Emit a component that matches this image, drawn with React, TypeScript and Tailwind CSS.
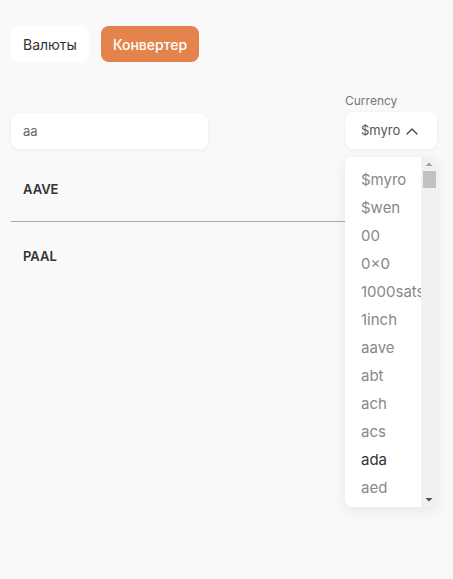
import { useState } from "react";

const currencies = [
  "$myro",
  "$wen",
  "00",
  "0×0",
  "1000sats",
  "1inch",
  "aave",
  "abt",
  "ach",
  "acs",
  "ada",
  "aed",
];

const results = ["AAVE", "PAAL"];

const ChevronUp = () => (
  <svg width="12" height="8" viewBox="0 0 12 8" fill="none">
    <path d="M1 7l5-5 5 5" stroke="#444" strokeWidth="1.3" strokeLinecap="round" strokeLinejoin="round" />
  </svg>
);

const FakeScrollbar = () => (
  <div className="w-[16px] shrink-0 bg-[#f1f1f1] flex flex-col items-center">
    <svg width="16" height="14" viewBox="0 0 16 14">
      <path d="M4.5 9h7L8 5.5z" fill="#a3a3a3" />
    </svg>
    <div className="w-[13px] h-[17px] bg-[#c1c1c1]" />
    <div className="flex-1" />
    <svg width="16" height="14" viewBox="0 0 16 14">
      <path d="M4.5 5h7L8 8.5z" fill="#505050" />
    </svg>
  </div>
);

const App = () => {
  const [tab, setTab] = useState("convert");
  const [query, setQuery] = useState("aa");

  return (
    <div className="min-h-[579px] bg-[#f9f9f9] px-[11px] pt-[26px] font-['Inter',sans-serif]">
      <div className="flex gap-3">
        <button
          onClick={() => setTab("list")}
          className={`h-[36px] px-3 rounded-lg text-[14px] ${
            tab === "list" ? "bg-[#e4834b] text-white font-medium" : "bg-white text-[#333]"
          }`}
        >
          Валюты
        </button>
        <button
          onClick={() => setTab("convert")}
          className={`h-[36px] px-3 rounded-lg text-[14px] ${
            tab === "convert" ? "bg-[#e4834b] text-white font-medium" : "bg-white text-[#333]"
          }`}
        >
          Конвертер
        </button>
      </div>

      <div className="flex items-end justify-between mt-[31px]">
        <input
          value={query}
          onChange={(e) => setQuery(e.target.value)}
          className="w-[197px] h-[36px] rounded-lg bg-white px-3 text-[13px] text-[#666] outline-none shadow-[0_1px_4px_rgba(0,0,0,0.06)]"
        />
        <div className="relative w-[92px] mr-[5px]">
          <div className="text-[12px] text-[#777] leading-4 mb-[3px]">Currency</div>
          <div className="h-[37px] rounded-lg bg-white flex items-center justify-between pl-4 pr-[19px] text-[13px] text-[#555] shadow-[0_1px_4px_rgba(0,0,0,0.06)]">
            <span>$myro</span>
            <ChevronUp />
          </div>
          <div className="absolute left-0 top-[64px] z-10 w-[92px] h-[350px] flex rounded-lg overflow-hidden bg-white shadow-[0_4px_14px_rgba(0,0,0,0.08)]">
            <div className="flex-1 overflow-hidden pt-[9px]">
              {currencies.map((c) => (
                <div
                  key={c}
                  className={`h-[28px] pl-4 flex items-center text-[15px] whitespace-nowrap ${
                    c === "ada" ? "text-[#333]" : "text-[#888]"
                  }`}
                >
                  {c}
                </div>
              ))}
            </div>
            <FakeScrollbar />
          </div>
        </div>
      </div>

      <div className="mt-[7px] mr-[5px]">
        {results.map((r, i) => (
          <div
            key={r}
            className={`h-[66px] flex items-center px-3 pt-[3px] text-[13px] font-semibold text-[#333] ${
              i < results.length - 1 ? "border-b border-[#aaa]" : ""
            }`}
          >
            {r}
          </div>
        ))}
      </div>
    </div>
  );
};

export default App;
